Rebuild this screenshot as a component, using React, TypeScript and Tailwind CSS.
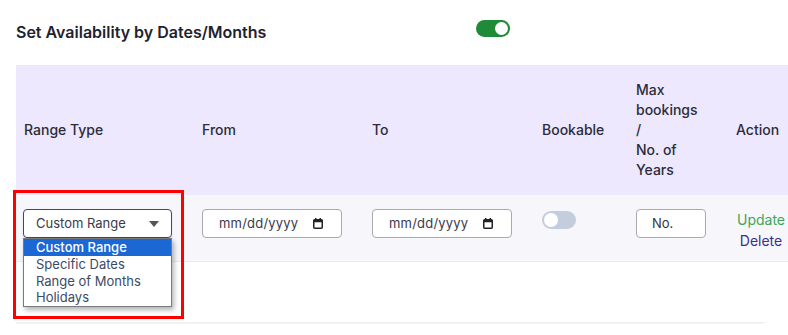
import React from "react";

function Calendar() {
  return (
    <svg width="10" height="11" viewBox="0 0 10 11" className="shrink-0">
      <rect x="0.75" y="1.75" width="8.5" height="8.5" rx="1" fill="none" stroke="#222" strokeWidth="1.5" />
      <rect x="0.75" y="1.75" width="8.5" height="2.5" fill="#222" />
      <rect x="2" y="0" width="1.5" height="2" fill="#222" />
      <rect x="6.5" y="0" width="1.5" height="2" fill="#222" />
    </svg>
  );
}

function DateBox() {
  return (
    <div className="flex items-center w-[140px] h-[29px] bg-white border border-[#a9a9b1] rounded-[4px] pl-[16px] pr-[18px]">
      <span className="text-[13px] text-[#3a3a4a] tracking-[0.2px]">mm/dd/yyyy</span>
      <span className="ml-auto"><Calendar /></span>
    </div>
  );
}

export default function App() {
  return (
    <div className="relative w-[788px] h-[335px] overflow-hidden bg-white font-['Inter',sans-serif] text-[#2b2b38]">
      <div className="flex items-start pt-[20px] pl-4">
        <div className="w-[460px] shrink-0 text-[16px] leading-6 font-semibold text-[#22222e]">
          Set Availability by Dates/Months
        </div>
        <div className="relative w-[34px] h-[17px] rounded-full bg-[#1f8b38]">
          <div className="absolute right-[2px] top-[2px] w-[13px] h-[13px] rounded-full bg-white" />
        </div>
      </div>

      <div className="ml-4 mt-[21px] w-[756px] rounded-br-xl border-b-2 border-[#f1f1f4]">
        <div className="w-[830px]">
          <div className="flex h-[130px] items-center bg-[#ede8fd] text-[14px] leading-5 font-medium text-[#2c2c3a]">
            <div className="w-[178px] shrink-0 px-2">Range Type</div>
            <div className="w-[170px] shrink-0 px-2">From</div>
            <div className="w-[170px] shrink-0 px-2">To</div>
            <div className="w-[94px] shrink-0 px-2">Bookable</div>
            <div className="w-[100px] shrink-0 px-2">
              Max<br />bookings<br />/<br />No. of<br />Years
            </div>
            <div className="w-[100px] shrink-0 px-2">Action</div>
          </div>
          <div className="flex h-[67px] items-start bg-[#f7f6fb] border-b border-[#ececf0] pt-[14px]">
            <div className="w-[178px] shrink-0 pl-[7px]">
              <div className="flex items-center w-[149px] h-[29px] bg-white border border-[#4a3b8e] rounded-[4px] pl-[12px] pr-[12px] shadow-[0_2px_3px_rgba(0,0,0,0.08)]">
                <span className="text-[13px] text-[#3a3a4a]">Custom Range</span>
                <svg width="10" height="6" viewBox="0 0 10 6" className="ml-auto">
                  <path d="M0 0 L10 0 L5 6 Z" fill="#555" />
                </svg>
              </div>
            </div>
            <div className="w-[170px] shrink-0 pl-2"><DateBox /></div>
            <div className="w-[170px] shrink-0 pl-2"><DateBox /></div>
            <div className="w-[94px] shrink-0 pl-2 pt-[2px]">
              <div className="relative w-[34px] h-[18px] rounded-full bg-[#c3cddd]">
                <div className="absolute left-[2px] top-[2px] w-[14px] h-[14px] rounded-full bg-white" />
              </div>
            </div>
            <div className="w-[100px] shrink-0 pl-2">
              <div className="flex items-center w-[70px] h-[29px] bg-white border border-[#a9a9b1] rounded-[4px] pl-[15px] text-[13px] text-[#333]">
                No.
              </div>
            </div>
            <div className="w-[100px] shrink-0 pl-2">
              <div className="flex flex-col items-center w-[50px] text-[14px] leading-[21px]">
                <span className="text-[#3aa85a]">Update</span>
                <span className="text-[#3b2e8c]">Delete</span>
              </div>
            </div>
          </div>
          <div className="h-[60px] bg-white" />
        </div>
      </div>

      {/* open select dropdown */}
      <div className="absolute left-[23px] top-[238px] w-[149px] bg-white border border-[#7a7a7a] shadow-[2px_3px_5px_rgba(0,0,0,0.3)] text-[13px] leading-[16.75px] text-[#3c4a66]">
        <div className="pl-[12px] bg-[#1b67d3] text-white font-medium">Custom Range</div>
        <div className="pl-[12px]">Specific Dates</div>
        <div className="pl-[12px]">Range of Months</div>
        <div className="pl-[12px]">Holidays</div>
      </div>

      {/* red annotation box */}
      <div className="absolute left-[13px] top-[190px] w-[171px] h-[129px] border-[3px] border-[#ff0000]" />
    </div>
  );
}
